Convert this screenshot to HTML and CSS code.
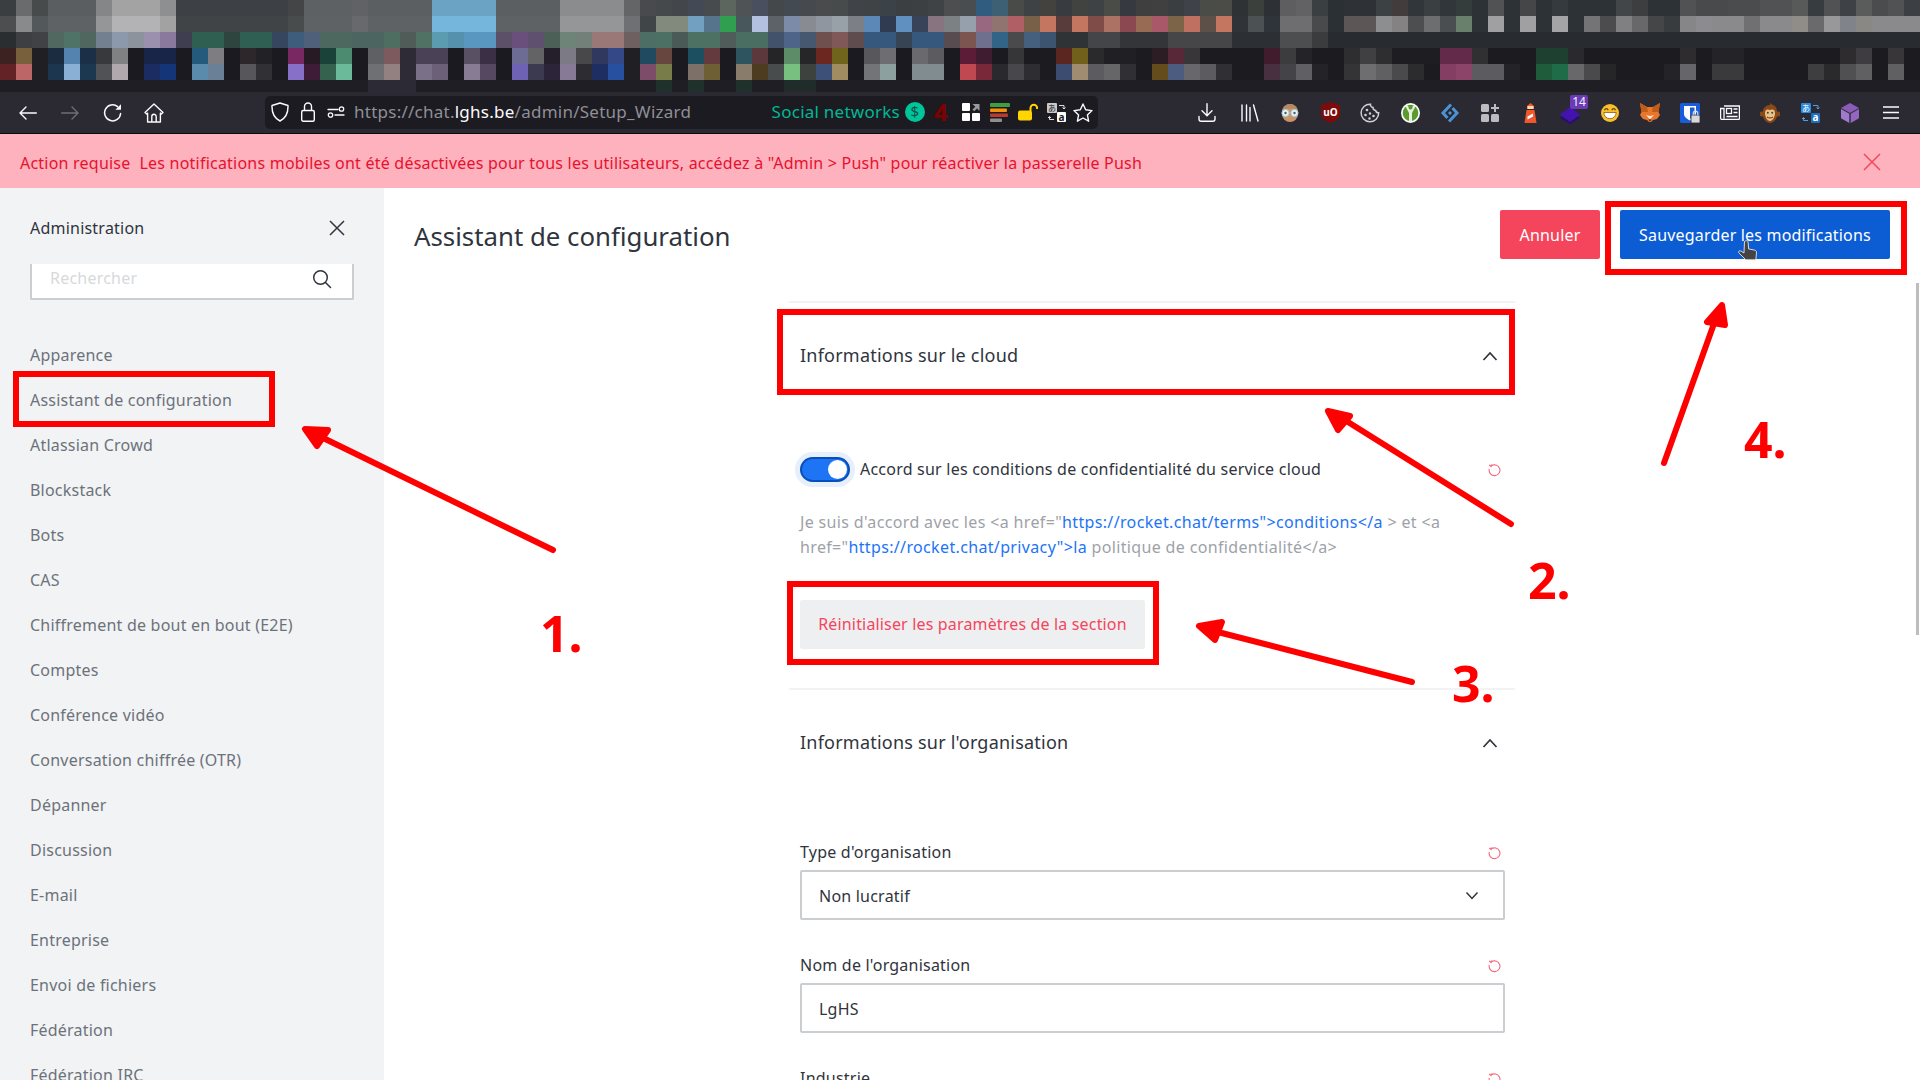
FILE: index.html
```html
<!DOCTYPE html>
<html lang="fr">
<head>
<meta charset="utf-8">
<title>Assistant de configuration</title>
<link rel="stylesheet" href="styles.css">
</head>
<body>
<svg id="mosaic" class="mosaic" width="1920" height="92" viewBox="0 0 1920 92" shape-rendering="crispEdges"></svg>

<header class="toolbar">
  <div class="nav-btns">
    <span class="nav-cell"><svg width="18" height="14" viewBox="0 0 18 14" fill="none" stroke="#fbfbfe" stroke-width="1.4" stroke-linecap="round" stroke-linejoin="round"><path d="M17.3 7H1M7 1 1 7l6 6"/></svg></span>
    <span class="nav-cell"><svg width="18" height="14" viewBox="0 0 18 14" fill="none" stroke="#6f6e76" stroke-width="1.4" stroke-linecap="round" stroke-linejoin="round"><path d="M.7 7H17M11 1l6 6-6 6"/></svg></span>
    <span class="nav-cell nav-reload"><svg width="20" height="20" viewBox="0 0 20 20" fill="none" stroke="#fbfbfe" stroke-width="1.5" stroke-linecap="round"><path d="M17.6 10.5A8 8 0 1 1 14.6 3.6"/><path d="M18 1.2v5.6h-5.6z" fill="#fbfbfe" stroke="none"/></svg></span>
    <span class="nav-cell"><svg width="20" height="20" viewBox="0 0 20 20" fill="none" stroke="#fbfbfe" stroke-width="1.4" stroke-linejoin="round"><path d="M1 9.5 10 1l9 8.500-1.600 1.500-1-.9V19H3.600v-8.900l-1 .9z"/><path d="M7.800 19v-5.500a2.200 2.200 0 0 1 4.400 0V19"/></svg></span>
  </div>

  <div class="urlbar">
    <span class="url-ic"><svg width="18" height="20" viewBox="0 0 18 20" fill="none" stroke="#fbfbfe" stroke-width="1.4" stroke-linejoin="round"><path d="M9 1 17 3.500c.3 7.500-2 12.500-8 15.500C3 16 .7 11 1 3.500z"/></svg></span>
    <span class="url-ic"><svg width="14" height="20" viewBox="0 0 14 20" fill="none" stroke="#fbfbfe" stroke-width="1.4" stroke-linejoin="round"><rect x=".7" y="8.500" width="12.600" height="10.800" rx="1.500"/><path d="M3.500 8.500V4.500a3.500 3.500 0 0 1 7 0v4"/></svg></span>
    <span class="url-ic url-ic-narrow"><svg width="18" height="12" viewBox="0 0 18 12" fill="none" stroke="#fbfbfe" stroke-width="1.300" stroke-linecap="round"><path d="M1 3.500h10M8 9h9"/><circle cx="14.500" cy="3" r="2.200"/><circle cx="3.500" cy="9" r="2.200"/></svg></span>
    <span class="url-text">https://chat.<b class="url-host">lghs.be</b>/admin/Setup_Wizard</span>
    <span class="url-right">
      <span class="social">Social networks</span>
      <span class="uc uc-dollar"><svg width="20" height="20" viewBox="0 0 20 20"><circle cx="10" cy="10" r="10" fill="#00c49a"/><text x="10" y="15.200" class="dollar-glyph">$</text></svg></span>
      <span class="uc uc-four">4</span>
      <span class="uc uc-grid"><svg width="18" height="18" viewBox="0 0 18 18"><rect width="8" height="8" rx="1" fill="#fff"/><rect x="10" y="10" width="8" height="8" rx="1" fill="#fff"/><rect y="10" width="8" height="8" rx="1" fill="#fff"/><path d="M10.500 1h7v7l-2.500-2.500-2.800 2.800-1.700-1.700 2.800-2.800z" fill="#999"/></svg></span>
      <span class="uc uc-bars"><svg width="20" height="19" viewBox="0 0 20 19"><rect width="20" height="4" rx="1" fill="#3f9e3f"/><rect y="5.500" width="17" height="3.500" rx="1" fill="#f0930a"/><rect y="10.500" width="18" height="3.500" rx="1" fill="#bd3a2c"/><rect y="15.500" width="12" height="3.500" rx="1" fill="#8f8f8f"/></svg></span>
      <span class="uc"><svg width="20" height="18" viewBox="0 0 20 18"><path d="M12.500 8V5a3.300 3.300 0 0 1 6.600 0v1" fill="none" stroke="#ffd400" stroke-width="2"/><rect y="7.500" width="14" height="10" rx="2" fill="#ffd400"/></svg></span>
      <span class="uc"><svg width="19" height="19" viewBox="0 0 19 19"><rect width="10" height="10" rx="1" fill="#c8c8c8"/><text x="5" y="8.200" class="tr-glyph-j tr-dark">あ</text><rect x="10" y="9" width="9" height="10" rx="1" fill="#fff"/><text x="14.500" y="17.500" class="tr-glyph tr-dark">a</text><path d="M12 2.500h5v3M15.500 4.500l1.500 1.500 1.500-1.500M7 16.500H2.500v-3M1 15l1.500-1.500L4 15" fill="none" stroke="#ddd" stroke-width="1"/></svg></span>
      <span class="uc uc-star"><svg width="20" height="19" viewBox="0 0 20 19" fill="none" stroke="#fbfbfe" stroke-width="1.400" stroke-linejoin="round"><path d="m10 1 2.700 5.800 6.300.8-4.600 4.300 1.200 6.300L10 15l-5.600 3.200 1.200-6.300L1 7.600l6.300-.8z"/></svg></span>
    </span>
  </div>

  <div class="tools">
    <span class="tool"><svg width="18" height="19" viewBox="0 0 18 19" fill="none" stroke="#fbfbfe" stroke-width="1.400" stroke-linecap="round" stroke-linejoin="round"><path d="M9 .8v11.500M4 7.800l5 5 5-5M1 13.500v2.500a2.200 2.200 0 0 0 2.200 2.200h11.600A2.200 2.200 0 0 0 17 16v-2.500"/></svg></span>
    <span class="tool tool-lib"><svg width="18" height="18" viewBox="0 0 18 18" fill="none" stroke="#fbfbfe" stroke-width="1.400" stroke-linecap="round"><path d="M1 1v16M5.500 1v16M9 3.500V17M12.500 1 17 17"/></svg></span>
    <span class="tool"><svg width="20" height="20" viewBox="0 0 20 20"><path d="M2 9a8 8 0 0 1 16 0v2a8 8 0 0 1-16 0z" fill="#c89468"/><path d="M2.500 7C4 2 8 1 10 1s6 1 7.500 6L13 5.500 7 5.500z" fill="#b08a60"/><circle cx="5.500" cy="10" r="3.600" fill="#e6f4f6" stroke="#a8c8d8" stroke-width="1"/><circle cx="14.500" cy="10" r="3.600" fill="#e6f4f6" stroke="#a8c8d8" stroke-width="1"/><circle cx="5.500" cy="10" r="1.200" fill="#4c5a68"/><circle cx="14.500" cy="10" r="1.200" fill="#4c5a68"/></svg></span>
    <span class="tool"><svg width="19" height="21" viewBox="0 0 19 21"><path d="M9.500 0 19 3v9c0 4-4 7-9.500 9C4 19 0 16 0 12V3z" fill="#7d0b0b"/><text x="9.500" y="13.500" class="ublock-glyph">uO</text></svg></span>
    <span class="tool"><svg width="20" height="20" viewBox="0 0 20 20" fill="none" stroke="#cfcfd3" stroke-width="1.500"><path d="M10.500 1.200a2.800 2.800 0 0 0 2.500 3.300 3 3 0 0 0 2.600 3 3 3 0 0 0 3.100 2.300A8.800 8.800 0 1 1 10.500 1.200z"/><g fill="#cfcfd3" stroke="none"><circle cx="7" cy="7" r="1.300"/><circle cx="5.500" cy="12" r="1.300"/><circle cx="10" cy="10.500" r="1.200"/><circle cx="13.500" cy="13" r="1.300"/><circle cx="9.500" cy="15.500" r="1.200"/></g></svg></span>
    <span class="tool"><svg width="19" height="20" viewBox="0 0 19 20"><ellipse cx="9.500" cy="10" rx="9.500" ry="10" fill="#fff"/><ellipse cx="9.500" cy="10" rx="7.800" ry="8.300" fill="#5b9a2f"/><path d="M4 2.500h3l1 3.500h3l1-3.500h3L12 8l-1 2v8H8v-8L7 8z" fill="#e6f0dc"/><circle cx="9.500" cy="5" r="1.600" fill="#5b9a2f"/></svg></span>
    <span class="tool"><svg width="20" height="20" viewBox="0 0 20 20" fill="none" stroke="#4b93d6" stroke-width="3" stroke-linejoin="miter"><path d="M11 1.500 3 10l4.500 5"/><path d="M9 18.500 17 10l-4.500-5"/><path d="M10 8l2 2-2 2-2-2z" fill="#4b93d6" stroke="none"/></svg></span>
    <span class="tool"><svg width="18" height="18" viewBox="0 0 18 18" fill="#bcbcc0"><rect width="8" height="8" rx="1.500"/><rect y="10" width="8" height="8" rx="1.500"/><rect x="10" y="10" width="8" height="8" rx="1.500"/><path d="M13 0h2v3h3v2h-3v3h-2V5h-3V3h3z"/></svg></span>
    <span class="tool"><svg width="15" height="20" viewBox="0 0 15 20"><path d="M7.500 0 11 3v3H4V3z" fill="#f0572d"/><rect x="4.500" y="3" width="6" height="3" fill="#ffd9a0"/><path d="M3.500 7h8l2 13h-12z" fill="#f0572d"/><path d="M4.500 13.500 10 10.500v3l-5.500 3z" fill="#fff"/></svg></span>
    <span class="tool tool-badge"><svg width="22" height="17" viewBox="0 0 22 17"><path d="M11 0l10 7.500-10 7.500L1 7.500z" fill="#4313b0"/><path d="M3 9.500 11 15.500 19 9.500l2 1.500-10 6-10-6z" fill="#2a0a7a"/></svg><span class="badge">14</span></span>
    <span class="tool"><svg width="18" height="18" viewBox="0 0 18 18"><circle cx="9" cy="9" r="9" fill="#f7bf2e"/><path d="M2.800 8.500h12.400a6.200 6.200 0 0 1-12.400 0z" fill="#fff" stroke="#8a5a10" stroke-width=".8"/><path d="M3.500 6.200c.8-2 2.900-2 3.700 0M10.800 6.200c.8-2 2.900-2 3.700 0" fill="none" stroke="#6a430c" stroke-width="1.300"/></svg></span>
    <span class="tool"><svg width="20" height="19" viewBox="0 0 20 19"><path d="M0 0l7 4h6l7-4-1.500 9 1.500 3-3 4-4 1-3 3-3-3-4-1-3-4 1.500-3z" fill="#e8762b"/><path d="M0 0l7 4 1 5-6.500 0z" fill="#c25c18"/><path d="M20 0l-7 4-1 5 6.500 0z" fill="#c25c18"/><path d="M6 12l4 4.500 4-4.500-4 1z" fill="#f3e4d8"/><path d="M8.500 16.500h3L10 18.500z" fill="#2b2118"/></svg></span>
    <span class="tool"><svg width="20" height="20" viewBox="0 0 20 20"><rect width="20" height="20" rx="1.500" fill="#175ddc"/><path d="M4 3h12v8c0 3-3 5-6 6.500C7 16 4 14 4 11z" fill="#fff"/><path d="M10 4.500h4.500V11c0 1.800-2 3.300-4.500 4.700z" fill="#175ddc"/><rect x="11" y="12" width="9" height="8" rx="1" fill="#d8d8dc" stroke="#2b2a33" stroke-width=".8"/><path d="M13.200 12v-1.500a2.300 2.300 0 0 1 4.600 0V12" fill="none" stroke="#d8d8dc" stroke-width="1.200"/></svg></span>
    <span class="tool"><svg width="20" height="15" viewBox="0 0 20 15" fill="none" stroke="#fbfbfe" stroke-width="1.300"><path d="M4 1h15.400v12.500a1 1 0 0 1-1 1H2a1.400 1.400 0 0 1-1.400-1.400V3.500H4v10"/><rect x="6.500" y="3.500" width="5" height="5"/><path d="M13.500 4h4M13.500 7.500h4M6.500 11.500h11"/></svg></span>
    <span class="tool"><svg width="20" height="20" viewBox="0 0 20 20"><path d="M10 0c1 1 2 1.200 2.500 1.800C16 3 17 6 17 8.500l1 0a2.500 2.500 0 0 1 0 5h-1C16 17 13 20 10 20s-6-3-7-6.500H2a2.500 2.500 0 0 1 0-5h1C3 5 6 2 10 2z" fill="#8a4a18"/><path d="M5 10c0-3 2-4 3-3.500 1 .5 3 .5 4 0s3 .5 3 3.500c0 4-2.500 8-5 8s-5-4-5-8z" fill="#ecc08a"/><circle cx="7.800" cy="9.800" r="1" fill="#245a24"/><circle cx="12.200" cy="9.800" r="1" fill="#245a24"/><path d="M7 14c1.500 1.300 4.500 1.300 6 0" fill="none" stroke="#5a3010" stroke-width="1"/></svg></span>
    <span class="tool"><svg width="19" height="20" viewBox="0 0 19 20"><rect width="10" height="10" rx="1" fill="#2a8ae0"/><text x="5" y="8.200" class="tr-glyph-j">あ</text><rect x="10" y="10" width="9" height="10" rx="1" fill="#1c6fc0"/><text x="14.500" y="18.300" class="tr-glyph">a</text><path d="M12 2.500h5v3M15.500 4.500l1.500 1.500 1.500-1.500M7 17.500H2.500v-3M1 16l1.500-1.500L4 16" fill="none" stroke="#4aa0e8" stroke-width="1"/></svg></span>
    <span class="tool"><svg width="18" height="20" viewBox="0 0 18 20"><path d="M9 0l9 5-9 5-9-5z" fill="#8a5cb8"/><path d="M0 6l8.300 4.700V20L0 15.200z" fill="#a078cc"/><path d="M18 6 9.700 10.700V20L18 15.200z" fill="#9466c2"/></svg></span>
    <span class="tool tool-menu"><svg width="16" height="13" viewBox="0 0 16 13" stroke="#fbfbfe" stroke-width="1.700"><path d="M0 1h16M0 6.500h16M0 12h16"/></svg></span>
  </div>
</header>

<div class="banner">
  <p class="banner-text"><span class="banner-lead">Action requise</span>Les notifications mobiles ont été désactivées pour tous les utilisateurs, accédez à "Admin &gt; Push" pour réactiver la passerelle Push</p>
  <svg class="banner-x" width="18" height="18" viewBox="0 0 18 18" stroke="#f5455c" stroke-width="1.500"><path d="M1 1l16 16M17 1 1 17"/></svg>
</div>

<div class="app">
  <aside class="sidebar">
    <div class="side-head">
      <span class="side-title">Administration</span>
      <svg width="16" height="16" viewBox="0 0 16 16" stroke="#2f343d" stroke-width="1.500"><path d="M1 1l14 14M15 1 1 15"/></svg>
    </div>
    <div class="side-search">
      <span class="placeholder">Rechercher</span>
      <svg width="20" height="20" viewBox="0 0 20 20" fill="none" stroke="#2f343d" stroke-width="1.500" stroke-linecap="round"><circle cx="8.500" cy="8.500" r="6.800"/><path d="M13.500 13.500l5 5"/></svg>
    </div>
    <nav class="side-nav">
      <a class="side-item">Apparence</a>
      <a class="side-item">Assistant de configuration</a>
      <a class="side-item">Atlassian Crowd</a>
      <a class="side-item">Blockstack</a>
      <a class="side-item">Bots</a>
      <a class="side-item">CAS</a>
      <a class="side-item">Chiffrement de bout en bout (E2E)</a>
      <a class="side-item">Comptes</a>
      <a class="side-item">Conférence vidéo</a>
      <a class="side-item">Conversation chiffrée (OTR)</a>
      <a class="side-item">Dépanner</a>
      <a class="side-item">Discussion</a>
      <a class="side-item">E-mail</a>
      <a class="side-item">Entreprise</a>
      <a class="side-item">Envoi de fichiers</a>
      <a class="side-item">Fédération</a>
      <a class="side-item">Fédération IRC</a>
    </nav>
  </aside>

  <main class="main">
    <div class="page-head">
      <h1 class="page-title">Assistant de configuration</h1>
      <div class="actions">
        <button class="btn btn-cancel">Annuler</button>
        <button class="btn btn-save">Sauvegarder les modifications</button>
      </div>
    </div>

    <div class="content">
      <section class="section section-cloud">
        <div class="section-head">
          <h2 class="section-title">Informations sur le cloud</h2>
          <svg width="16" height="10" viewBox="0 0 16 10" fill="none" stroke="#2f343d" stroke-width="1.700"><path d="M1.500 9 8 2l6.500 7"/></svg>
        </div>
        <div class="toggle-row">
          <span class="toggle"><span class="knob"></span></span>
          <span class="toggle-label">Accord sur les conditions de confidentialité du service cloud</span>
          <svg class="reset" width="14" height="14" viewBox="0 0 14 14" fill="none" stroke="#f7697c" stroke-width="1.100"><path d="M3 2.200a5.400 5.400 0 1 1-1.700 2.800"/><path d="M1.200 1 3 2.400l.4-2"/></svg>
        </div>
        <p class="desc">Je suis d'accord avec les &lt;a href="<a class="link">https://rocket.chat/terms"&gt;conditions&lt;/a</a> &gt; et &lt;a<br>href="<a class="link">https://rocket.chat/privacy"&gt;la</a> politique de confidentialité&lt;/a&gt;</p>
        <button class="btn btn-reset">Réinitialiser les paramètres de la section</button>
      </section>

      <section class="section section-org">
        <div class="section-head">
          <h2 class="section-title">Informations sur l'organisation</h2>
          <svg width="16" height="10" viewBox="0 0 16 10" fill="none" stroke="#2f343d" stroke-width="1.700"><path d="M1.500 9 8 2l6.500 7"/></svg>
        </div>
        <div class="field">
          <div class="field-label"><span>Type d'organisation</span><svg class="reset" width="14" height="14" viewBox="0 0 14 14" fill="none" stroke="#f7697c" stroke-width="1.100"><path d="M3 2.200a5.400 5.400 0 1 1-1.700 2.800"/><path d="M1.200 1 3 2.400l.4-2"/></svg></div>
          <div class="input input-select"><span>Non lucratif</span><svg width="14" height="9" viewBox="0 0 14 9" fill="none" stroke="#2f343d" stroke-width="1.500"><path d="M1.500 1.500 7 7.500l5.500-6"/></svg></div>
        </div>
        <div class="field">
          <div class="field-label"><span>Nom de l'organisation</span><svg class="reset" width="14" height="14" viewBox="0 0 14 14" fill="none" stroke="#f7697c" stroke-width="1.100"><path d="M3 2.200a5.400 5.400 0 1 1-1.700 2.800"/><path d="M1.200 1 3 2.400l.4-2"/></svg></div>
          <div class="input"><span>LgHS</span></div>
        </div>
        <div class="field">
          <div class="field-label"><span>Industrie</span><svg class="reset" width="14" height="14" viewBox="0 0 14 14" fill="none" stroke="#f7697c" stroke-width="1.100"><path d="M3 2.200a5.400 5.400 0 1 1-1.700 2.800"/><path d="M1.200 1 3 2.400l.4-2"/></svg></div>
        </div>
      </section>
    </div>
    <div class="scrollbar"></div>
  </main>
</div>

<svg class="overlay" width="1920" height="1080" viewBox="0 0 1920 1080">
  <g class="note-box" fill="none" stroke="#ff0000" stroke-width="6">
    <rect x="16" y="374" width="256" height="50"/>
    <rect x="780" y="312" width="732" height="80"/>
    <rect x="790" y="584" width="366" height="78"/>
    <rect x="1608" y="204" width="296" height="68"/>
  </g>
  <g class="note-arrow" fill="#ff0000" stroke="#ff0000" stroke-width="6" stroke-linecap="round" stroke-linejoin="round">
    <path d="M553 550 315 434"/><path d="M305 429 328 430 317 446z"/>
    <path d="M1511 524 1340 417"/><path d="M1328 411 1350 416 1338 430z"/>
    <path d="M1412 682 1210 630"/><path d="M1199 626 1222 622 1215 640z"/>
    <path d="M1664 463 1716 318"/><path d="M1722 305 1707 322 1725 325z"/>
  </g>
  <g class="note-num" fill="#ff0000">
    <text x="540" y="652">1.</text>
    <text x="1528" y="599">2.</text>
    <text x="1452" y="702">3.</text>
    <text x="1744" y="458">4.</text>
  </g>
  <g class="cursor">
    <path d="M1744.500 241.500c1-1 3-1 3.500 0l.7 7.500 5.500 1c2 .5 2.500 1.500 2.300 3l-.7 6.800h-10l-7-7c-.8-1.500.8-2.500 2-1.800l3.200 2z" fill="#444" stroke="#e8e8e8" stroke-width=".9"/>
  </g>
</svg>
<script src="script.js"></script>
</body>
</html>
```
FILE: styles.css
```css
* { box-sizing: border-box; }
html, body { margin: 0; padding: 0; height: 1080px; overflow: hidden; }
body {
  position: relative;
  width: 1920px;
  background: #fff;
  color: #2f343d;
  font-family: "Noto Sans", "Open Sans", sans-serif;
  font-size: 16px;
  line-height: 1.4;
  letter-spacing: .22px;
}
.mosaic { display: block; background: #1f1e24; }

/* browser toolbar */
.toolbar {
  display: flex;
  align-items: center;
  height: 42px;
  padding-left: 7px;
  background: #2b2a33;
  border-bottom: 1px solid #0c0c0e;
}
.nav-btns { display: flex; width: 168px; }
.nav-cell { display: flex; align-items: center; justify-content: center; width: 42px; height: 41px; }
.nav-reload svg { margin-left: 2px; }
.urlbar {
  display: flex;
  align-items: center;
  width: 833px;
  height: 33px;
  margin-left: 90px;
  margin-top: -1px;
  padding-left: 1px;
  padding-right: 2px;
  border-radius: 5px;
  background: #1c1b22;
}
.url-ic { display: flex; align-items: center; justify-content: center; width: 28px; }
.url-ic-narrow { width: 27px; }
.url-text { margin-left: 5px; font-size: 17px; letter-spacing: .25px; color: #8f8f96; white-space: nowrap; }
.url-host { font-weight: 400; color: #fbfbfe; }
.url-right { display: flex; align-items: center; margin-left: auto; }
.social { font-size: 17px; letter-spacing: .25px; color: #00b894; white-space: nowrap; margin-right: 3px; }
.uc { display: flex; align-items: center; justify-content: center; width: 28px; }
.uc-dollar { width: 24px; }
.dollar-glyph { font-family: "Noto Sans", sans-serif; font-size: 15px; fill: #12514a; text-anchor: middle; }
.uc-four { font-weight: 700; font-size: 24px; line-height: 1; color: #7f0000; }
.uc-grid { margin-left: 2px; }
.uc-bars { margin-left: 1px; }
.uc-star { width: 26px; }
.tr-glyph, .tr-glyph-j { fill: #fff; text-anchor: middle; }
.tr-glyph { font-family: "Noto Sans", sans-serif; font-size: 10px; font-weight: 700; }
.tr-glyph-j { font-family: "Noto Sans CJK JP", sans-serif; font-size: 8px; }
.tr-glyph.tr-dark, .tr-glyph-j.tr-dark { fill: #222; }
.ublock-glyph { font-family: "Noto Sans", sans-serif; font-size: 10px; font-weight: 700; letter-spacing: 0; fill: #fff; text-anchor: middle; }
.tools { display: flex; align-items: center; margin-left: 89px; }
.tool { position: relative; display: flex; align-items: center; justify-content: center; width: 40px; height: 41px; }
.tool-lib { margin-left: 3px; }
.tool-menu { margin-left: 1px; }
.tool-badge svg { margin-top: 5px; }
.badge {
  position: absolute;
  top: 3px;
  left: 20px;
  width: 18px;
  height: 14px;
  border-radius: 2px;
  background: #6b3bb5;
  color: #f4effa;
  font-size: 12px;
  letter-spacing: 0;
  line-height: 14px;
  text-align: center;
}

/* banner */
.banner {
  display: flex;
  align-items: center;
  justify-content: space-between;
  height: 54px;
  padding: 1px 39px 0 20px;
  background: #fdb2bd;
}
.banner-text { margin: 0; padding-top: 3px; color: #e8102f; white-space: nowrap; }
.banner-lead { margin-right: 9px; }

/* layout */
.app { display: flex; height: 892px; overflow: hidden; }
.sidebar { flex: none; width: 384px; background: #f2f3f5; }
.side-head {
  display: flex;
  align-items: center;
  justify-content: space-between;
  height: 76px;
  padding: 4px 39px 0 30px;
}
.side-title { font-size: 16px; }
.side-search {
  display: flex;
  align-items: center;
  justify-content: space-between;
  width: 324px;
  height: 36px;
  margin-left: 30px;
  padding: 0 20px 4px 18px;
  background: #fff;
  border: 2px solid #cbced1;
  border-top: 0;
  border-radius: 0 0 2px 2px;
}
.placeholder { margin-bottom: 2px; color: #d7d9dc; }
.side-nav { margin-top: 33px; }
.side-item { display: flex; align-items: center; height: 45px; padding-left: 30px; color: #6c727a; white-space: nowrap; }

.main { position: relative; flex: 1; min-width: 0; }
.page-head {
  display: flex;
  align-items: center;
  justify-content: space-between;
  height: 93px;
  padding: 22px 30px;
}
.page-title { margin: 0; padding-top: 3px; font-size: 25.8px; font-weight: 400; letter-spacing: 0; }
.actions { display: flex; gap: 20px; }
.btn { font-family: inherit; font-size: 16px; line-height: 1.4; letter-spacing: .18px; border: 0; border-radius: 2px; }
.btn-cancel, .btn-save { height: 49px; padding-top: 2px; color: #fff; }
.btn-cancel { width: 100px; background: #f5455c; }
.btn-save { width: 270px; background: #0c5cd4; }
.scrollbar { position: absolute; top: 95px; right: 1px; width: 3px; height: 352px; background: #bdbdbd; }

.content { width: 726px; margin: 20px auto 0; }
.section { border-top: 2px solid #f2f3f5; padding: 0 10px 0 11px; }
.section-head { display: flex; align-items: center; justify-content: space-between; height: 104px; padding-top: 2px; padding-right: 7px; }
.section-title { margin: 0; font-size: 18px; font-weight: 400; }
.toggle-row { display: flex; align-items: center; height: 35px; margin-top: 45px; }
.toggle {
  position: relative;
  flex: none;
  width: 50px;
  height: 25px;
  border: 2px solid #0a4fb8;
  border-radius: 13px;
  background: #1d74f5;
  box-shadow: 0 0 0 5px #e6effc;
}
.knob { position: absolute; top: 1px; right: 1px; width: 19px; height: 19px; border-radius: 50%; background: #fff; }
.toggle-label { margin-left: 10px; }
.reset { flex: none; margin-left: auto; margin-right: 3px; margin-top: 3px; }
.desc { margin: 23px 0 40px; width: 705px; line-height: 25px; letter-spacing: .35px; color: #9ea2a8; }
.link { color: #1d74f5; }
.btn-reset { display: block; width: 345px; height: 49px; letter-spacing: .16px; background: #eeeff1; color: #f5455c; }
.section-cloud { padding-bottom: 39px; }
.section-org .section-head { height: 105px; padding-top: 0; margin-bottom: 39px; }
.field { margin-bottom: 27px; }
.field-label { display: flex; align-items: center; justify-content: space-between; height: 36px; }
.input {
  display: flex;
  align-items: center;
  justify-content: space-between;
  height: 50px;
  padding: 0 24px 0 17px;
  border: 2px solid #cbced1;
  border-radius: 2px;
}
.input span { padding-top: 2px; }

/* annotations drawn over the page */
.overlay { position: absolute; top: 0; left: 0; pointer-events: none; }
.note-num { font-family: "Noto Sans", sans-serif; font-size: 50px; font-weight: 700; letter-spacing: 0; }
```
FILE: script.js
```js
var rows = [
  "3a3e40 6a6b6c 474b4c 5b5e60*3 858688 a3a3a4*3 8e8f90 3d4044*7 434547 5e6163*3 616265 5b5f61*4 6ba3c4*4 5b5f61*4 8b8c8e*4 636567 " +
  "484a4d 46494b 43474c 434a55 474b4d 5c665e 505355 4a4f60 45484a 444a52 46494e 494b4d 484b4c 404448 404345 3b4248 3c3f42 3c4042 404345 4c4e50 4a4d4f 305c80 3d6074 494b48 3f4245 44423e 383c40 414340 3f4244 4a4c48 363a40 3e3f3e 404040 3a3e40 40424a 4a4c48 4b4c48 2e3235 3c403c 2d3136 " +
  "5e5e60 626264 3a4042 2a3034 2e3236*2 3c4244 423c3c 30363a 3a4042 30363a 343c3c 2c3236 505254 2c3236 444648 2c3236 343a3e 2c3236*3 424648 3c3e40 2c3236*2 505254 484a4c*2 4a4c4e*2 505254*2 585a5a 363c40 505254 3e4246 5a5c5c 4a4c4e 505254 3c4044",
  "4d4e4f 898a8b 53585a 5f6265*3 959698 b3b3b5*3 a2a2a3 414447*7 494c4d 5f6265*3 68696c 5e6264*4 74b6dc*4 5f6265*4 959698*4 6e7073 " +
  "404548 818a7c*2 72a0c0 56748c 30a050 47575c b4c0e0 5c6268 7c8ca8 888c92 90969f 98a0a8 7c8086 5c88b8 303a50 6090c0 384258 887480 7c8284 96a0ac 986880 907470 b06064 786048 c47660 583c3c c47660 804c48 ac7264 8c4850 986c54 a85868 7c6448 c07060 5c5048 c47660 303438 4c5254 2f343a " +
  "6e6e70*2 484a4c 2a3034 5c5656*2 8c8e90 848282 4c4e50 6c6e70 4a4e50 68806c 2c3236 a0a0a2 2c3236 a0a0a2 2c3236 a4a4a6 2c3236 747476 4c4c4e 808082 68686a 444648 383c3e 868688 8c8c90 8a8a8c*2 707072 8a8a8c*2 908c88 6a6a6c 98989a 80848a 8a8884 8a8a8c*3",
  "2a2e31 3d3f42 404245 516860 4f7467 4f675e 72808f 8c99ad 8c939c 9b90ad 8a799d 3f3d50 2f5f50*2 2e443f 2f5f52*2 35465e 3e5d7d 4f607a 4d695f*2 4d6560*2 4f6e62 4f5c58 4f7265 5b9cb0 5590ad 5a97c0*2 5c5068 6a4f7d 60506f 4d6058 6e8478 728079 997877*2 6e6060 " +
  "4d6e64 4c7064 4a5a56 4d7264*2 505c5a 4a6e62*2 42526a 4e6488 465870 70504e 805858 5f4c4e 36587c*2 364454 36587c*2 584c50 7c5450 6e708e 326488 4a4a4c 44607e 3c5470 303336*2 444548*2 343538*3 464649*4 2c3034*3 " +
  "4c4e50*2 3a3c3e 282c30*37",
  "3c2220 78603d 1f1f24 1b2c40 5383ae 1b2f47 38393d 808183 1a1a20 182448*2 1a1a20 245a7c 7e7e82 1a1a20 2d272c 222226 1a1a20 7a2862 281a24 1a4238 4d8b71 1a1a20 5f6063 7c5a5e 2e2b36 4a4156*2 1a1a20 5a5064 3a2f44 1a1a20 6c6c94 636365 251f2c 7c7a84 48484b 303860 344888 1f1f24 " +
  "204a60 66463f 1a1a20 1c5060 643a3f 1a1a20 2e5460 5c383c 252528 5c8c68 262628 6c2820 70641c 1a1a20 58585c 6e6e72 1a1a20 6a6a6e 5c5c60 1a1a20 5c1c38 401c30 1a1a20 363638 1c1c20*2 5c2620 70601c 2a2a2c 202024*2 1c1c20 2c1c24 582838 383638 1c1c20*4 401c2c " +
  "3c3c3e 242428 1c1c20*2 2e2e30 404042 2e2e30 1e1e22*3 642a4a*2 303032 1c1c20*3 1e4030*2 2a2a2e 1c1c20*6 2e2c2e 1c1c20 242428*2 1c1c20*6 2e2c2e 3e3c40 1c1c20 383638 1c1c20",
  "622226 bd6667 1f1f24 1c3650 8bb0d6 1b3850 515256 b0a8ac 1a1a20 1a2c62 143678 1a1a20 5a8bac 6a8096 1a1a20 57565a 313034 1a1a20 8770c8 3e1c38 34624e 6bbb9a 1a1a20 6f7073 938080 2e2b36 7a7088 6c6078 1a1a20 877c94 564860 1a1a20 6e62b4 3c3a50 2c2438 867a96 2c2c32 1e2e62 2850a0 1f1f24 " +
  "7c4c68 787c48 1a1a20 7c7068 6e6034 1a1a20 8a7c6a 4e3c20 484c4c 78c080 3e423e 3c5078 a08c60 1a1a20 737478 8ca0a0 1a1a20 808c90*2 1a1a20 c04850 782838 2a2a2e 48484c 2e2e32 1c1c20 3c4c70 a08c70 5c5c60 666668 303034 1c1c20 644c1c 4c5c80 68686c 5c5c60 303034 1c1c20*2 483040 " +
  "444448 606064 242428 1c1c20 343436 6e6e70 606062 4a4a4c 2c2c2e 1c1c20 843e64 8c4468 5c5c60*2 242428 1c1c20 1e5c3c 1e6c48 68686a 4a4a4c 262628 1c1c20*3 242428 66666a 1c1c20 3a3a3c*2 1c1c20*4 3e3e40 2a2a2c 505052 606062 1c1c20 606062 1c1c20",
  "1f1e24*23 2c2a34*3 1f1e24*15 20302a 1f1e24 20302a 1f1e24*2 20302a 1f1e24*2 202c2a*2"
];
var svg = document.getElementById("mosaic");
rows.forEach(function (row, r) {
  var x = 0;
  row.split(" ").forEach(function (token) {
    var parts = token.split("*");
    var n = parts[1] ? +parts[1] : 1;
    var rect = document.createElementNS("http://www.w3.org/2000/svg", "rect");
    rect.setAttribute("x", x * 16);
    rect.setAttribute("y", r * 16);
    rect.setAttribute("width", n * 16);
    rect.setAttribute("height", r === 5 ? 12 : 16);
    rect.setAttribute("fill", "#" + parts[0]);
    svg.appendChild(rect);
    x += n;
  });
});
```
